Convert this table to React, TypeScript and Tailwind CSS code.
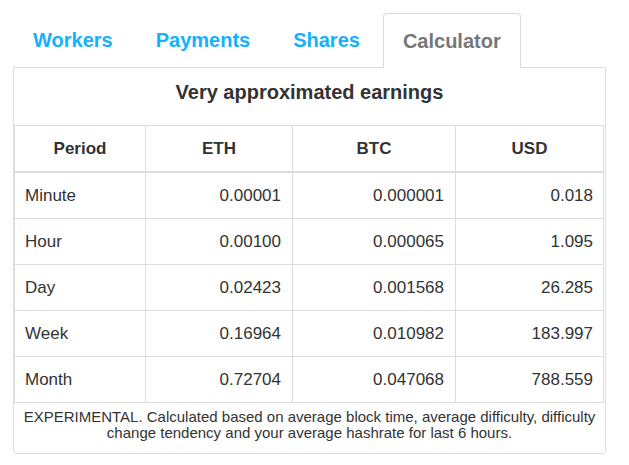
import React from 'react';

const rows = [
  { period: 'Minute', eth: '0.00001', btc: '0.000001', usd: '0.018' },
  { period: 'Hour', eth: '0.00100', btc: '0.000065', usd: '1.095' },
  { period: 'Day', eth: '0.02423', btc: '0.001568', usd: '26.285' },
  { period: 'Week', eth: '0.16964', btc: '0.010982', usd: '183.997' },
  { period: 'Month', eth: '0.72704', btc: '0.047068', usd: '788.559' },
];

const tabs = ['Workers', 'Payments', 'Shares', 'Calculator'];

const App = () => {
  return (
    <div className="min-h-[465px] bg-white pt-[13px] pl-[13px] font-['Liberation_Sans',Arial,sans-serif] text-[#333]">
      <div className="w-[593px]">
        {/* Tabs */}
        <ul className="flex h-[54px] items-end gap-[3px]">
          {tabs.map((tab) => {
            const active = tab === 'Calculator';
            return active ? (
              <li
                key={tab}
                className="relative z-10 -mb-px flex h-[55px] items-center rounded-t-[4px] border-x border-t border-[#ddd] bg-white px-[19px] text-[20px] font-bold text-[#777]"
              >
                {tab}
              </li>
            ) : (
              <li
                key={tab}
                className="flex h-[54px] items-center px-5 text-[20px] font-bold text-[#14b1ff]"
              >
                {tab}
              </li>
            );
          })}
        </ul>

        {/* Panel */}
        <div className="rounded-b-[4px] border border-[#ddd] bg-white">
          <div className="h-[57px] pt-[10px] text-center text-[20px] font-bold leading-[28px]">
            Very approximated earnings
          </div>

          <div className="w-[590px] border-t border-l border-[#ddd] text-[17px]">
            <div className="flex h-[47px] border-b-2 border-[#ddd] font-bold">
              <div className="flex w-[131px] items-center justify-center border-r border-[#ddd]">Period</div>
              <div className="flex w-[147px] items-center justify-center border-r border-[#ddd]">ETH</div>
              <div className="flex w-[163px] items-center justify-center border-r border-[#ddd]">BTC</div>
              <div className="flex w-[148px] items-center justify-center border-r border-[#ddd]">USD</div>
            </div>
            {rows.map((r) => (
              <div key={r.period} className="flex h-[46px] border-b border-[#ddd]">
                <div className="flex w-[131px] items-center border-r border-[#ddd] pl-[10px]">{r.period}</div>
                <div className="flex w-[147px] items-center justify-end border-r border-[#ddd] pr-[11px]">{r.eth}</div>
                <div className="flex w-[163px] items-center justify-end border-r border-[#ddd] pr-[11px]">{r.btc}</div>
                <div className="flex w-[148px] items-center justify-end border-r border-[#ddd] pr-[10px]">{r.usd}</div>
              </div>
            ))}
          </div>

          <div className="h-[50px] px-[8px] pt-[6px] text-center text-[15px] leading-[16px]">
            EXPERIMENTAL. Calculated based on average block time, average difficulty, difficulty change tendency and
            your average hashrate for last 6 hours.
          </div>
        </div>
      </div>
    </div>
  );
};

export default App;
